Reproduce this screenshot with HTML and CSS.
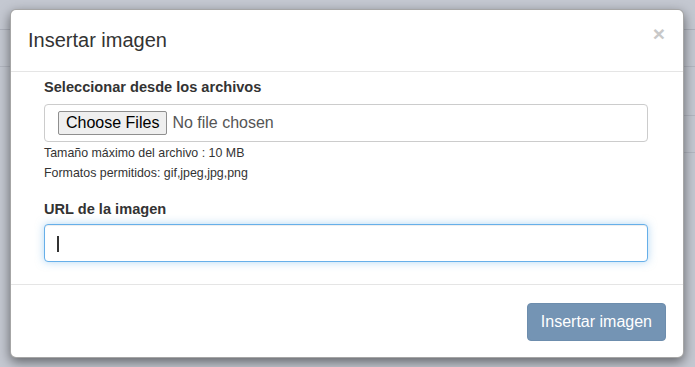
FILE: index.html
```html
<!DOCTYPE html>
<html lang="es">
<head>
    <meta charset="UTF-8">
    <title>Insertar imagen</title>
    <link rel="stylesheet" href="styles.css">
</head>
<body>
    <div class="backdrop">
        <div class="modal">
            <div class="modal-header">
                <h4 class="modal-title">Insertar imagen</h4>
                <span class="close">&times;</span>
            </div>
            <div class="modal-body">
                <label class="lbl">Seleccionar desde los archivos</label>
                <div class="file-box">
                    <span class="file-btn">Choose Files</span>
                    <span class="file-name">No file chosen</span>
                </div>
                <p class="help">Tamaño máximo del archivo : 10 MB</p>
                <p class="help">Formatos permitidos: gif,jpeg,jpg,png</p>
                <label class="lbl lbl-url">URL de la imagen</label>
                <div class="url-wrap">
                    <input type="text" class="url-input">
                    <span class="caret"></span>
                </div>
            </div>
            <div class="modal-footer">
                <button class="btn-insert">Insertar imagen</button>
            </div>
        </div>
    </div>
</body>
</html>
```

FILE: styles.css
```css
* {
    box-sizing: border-box;
    margin: 0;
}
body {
    width: 695px;
    height: 367px;
    overflow: hidden;
    font-family: "Liberation Sans", Arial, sans-serif;
    color: #333;
    background-color: #c4c8d1;
    /* faint lines of the page behind the overlay */
    background-image:
        linear-gradient(#aeb2bc, #aeb2bc),
        linear-gradient(#b3b7c1, #b3b7c1),
        linear-gradient(#b3b7c1, #b3b7c1),
        linear-gradient(#b3b7c1, #b3b7c1);
    background-size: 100% 1px, 100% 1px, 12px 1px, 20px 1px;
    background-position: 0 29px, 0 66px, 683px 115px, 683px 152px;
    background-repeat: no-repeat;
}
.backdrop {
    padding: 9px 0 0 10px;
}
.modal {
    width: 674px;
    height: 349px;
    background: #fff;
    border: 1px solid rgba(0, 0, 0, 0.35);
    border-radius: 6px;
    box-shadow: 0 4px 12px rgba(0, 0, 0, 0.5);
    display: flex;
    flex-direction: column;
}
.modal-header {
    display: flex;
    justify-content: space-between;
    align-items: flex-start;
    padding: 19px 18px 20px 17px;
    border-bottom: 1px solid #e5e5e5;
}
.modal-title {
    font-size: 20px;
    font-weight: normal;
    line-height: 22px;
}
.close {
    font-size: 21px;
    font-weight: bold;
    line-height: 18px;
    margin-top: -4px;
    color: #c8c8c8;
}
.modal-body {
    padding: 5px 35px 22px 33px;
}
.lbl {
    display: block;
    font-size: 14.6px;
    font-weight: bold;
    line-height: 20px;
    margin-bottom: 7px;
}
.lbl-url {
    margin-top: 16px;
    margin-bottom: 5px;
}
.file-box {
    height: 38px;
    border: 1px solid #ccc;
    border-radius: 4px;
    padding: 0 13px;
    display: flex;
    align-items: center;
    gap: 5px;
}
.file-btn {
    height: 24px;
    line-height: 22px;
    padding: 0 7px;
    font-size: 16px;
    color: #000;
    background: #efefef;
    border: 1px solid #8f8f8f;
    border-radius: 2px;
}
.file-name {
    font-size: 16px;
    color: #555;
}
.help {
    font-size: 12.4px;
    line-height: 20px;
    color: #333;
}
.help:first-of-type {
    margin-top: 1px;
}
.url-wrap {
    position: relative;
}
.url-input {
    display: block;
    width: 100%;
    height: 38px;
    border: 1px solid #66afe9;
    border-radius: 4px;
    outline: none;
    box-shadow: inset 0 1px 1px rgba(0, 0, 0, 0.075), 0 0 8px rgba(102, 175, 233, 0.5);
}
.caret {
    position: absolute;
    left: 13px;
    top: 12px;
    width: 2px;
    height: 16px;
    background: #333;
}
.modal-footer {
    display: flex;
    justify-content: flex-end;
    padding: 18px 17px 0;
    border-top: 1px solid #e5e5e5;
}
.btn-insert {
    height: 38px;
    padding: 0 13px;
    font-family: "Liberation Sans", Arial, sans-serif;
    font-size: 16px;
    color: #fff;
    background: #7494b4;
    border: 1px solid #6d8dad;
    border-radius: 4px;
}
```
